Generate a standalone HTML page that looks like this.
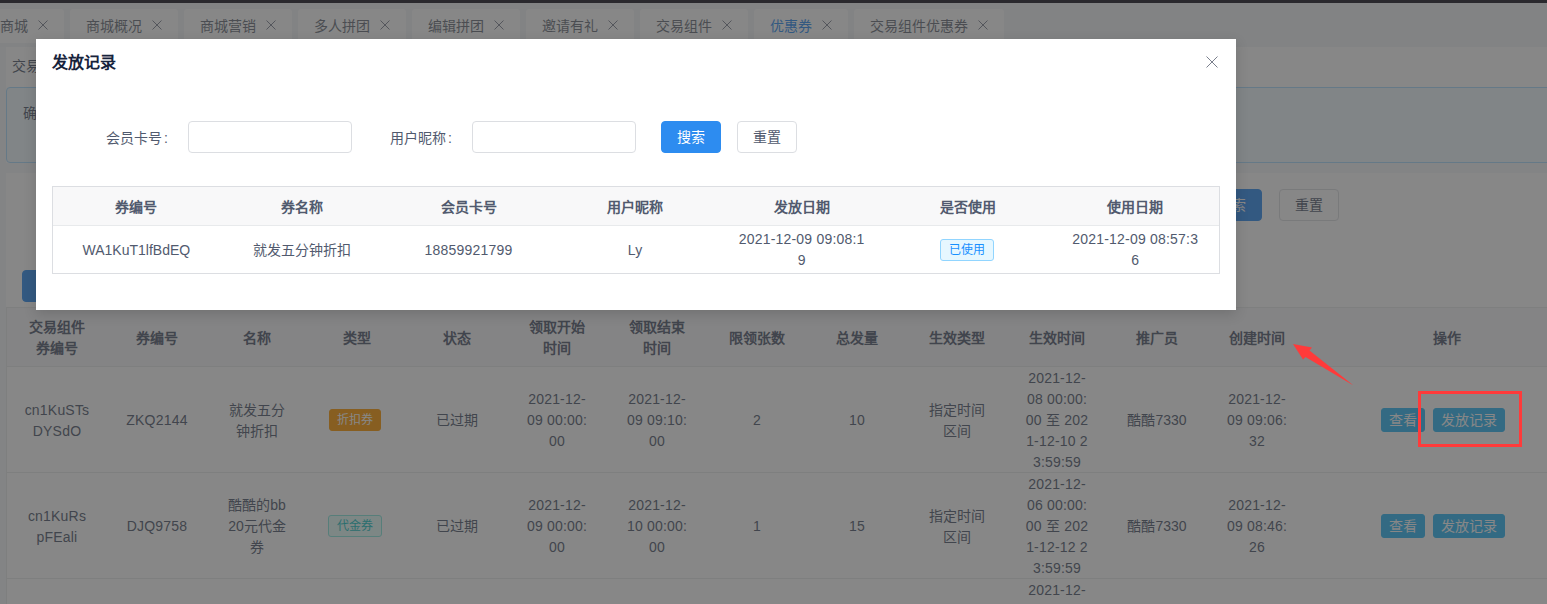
<!DOCTYPE html>
<html lang="zh-CN">
<head>
<meta charset="utf-8">
<style>
*{margin:0;padding:0;box-sizing:border-box;}
html,body{width:1547px;height:604px;overflow:hidden;}
body{position:relative;background:#f5f7f9;font-family:"Liberation Sans",sans-serif;font-size:14px;color:#515a6e;}
.a{position:absolute;}
.t{position:absolute;white-space:nowrap;line-height:21px;text-align:center;padding-top:1px;}
#topbar{left:0;top:0;width:1547px;height:3px;background:#2a292e;z-index:5;}
#tabbar{left:0;top:3px;width:1547px;height:44px;background:#f2f4f8;}
.tab{position:absolute;top:6px;height:34px;background:#fff;border-radius:3px;line-height:34px;font-size:14px;color:#6a6f7a;white-space:nowrap;}
.tab .x{position:absolute;top:0;font-size:12px;color:#808695;}
#content{left:6px;top:47px;width:1541px;height:557px;background:#fff;}
.alert{left:6px;top:87px;width:1560px;height:76px;background:#f0faff;border:1px solid #abdcff;border-radius:4px;}
.btn{position:absolute;height:32px;border-radius:4px;font-size:14px;line-height:30px;text-align:center;white-space:nowrap;}
.bp{background:#2d8cf0;border:1px solid #2d8cf0;color:#fff;}
.bd{background:#fff;border:1px solid #dcdee2;color:#515a6e;}
.bi{position:absolute;height:24px;border-radius:3px;background:#2db7f5;border:1px solid #2db7f5;color:#fff;font-size:14px;line-height:22px;text-align:center;white-space:nowrap;}
.th{font-weight:bold;}
.n{letter-spacing:0.2px;}
.hl{position:absolute;height:1px;background:#e8eaec;}
.tag{position:absolute;height:22px;border-radius:3px;font-size:12px;line-height:20px;text-align:center;white-space:nowrap;}
#mask{left:0;top:3px;width:1547px;height:601px;background:rgba(55,55,55,.6);z-index:10;}
#modal{left:36px;top:39px;width:1200px;height:271px;background:#fff;z-index:11;box-shadow:0 4px 12px rgba(0,0,0,.15);}
#anno{left:0;top:0;width:1547px;height:604px;z-index:20;}
</style>
</head>
<body>
<div id="topbar" class="a"></div>
<div id="tabbar" class="a">
  <div class="tab" style="left:-44px;width:108px;"><span style="position:absolute;left:44px;">商城</span><svg class="x" style="left:82px;top:11px;" width="10" height="10" viewBox="0 0 10 10"><path d="M0.5 0.5L9.5 9.5M9.5 0.5L0.5 9.5" stroke="#808695" stroke-width="1" fill="none"/></svg></div>
  <div class="tab" style="left:70px;width:108px;"><span style="position:absolute;left:16px;">商城概况</span><svg class="x" style="left:82px;top:11px;" width="10" height="10" viewBox="0 0 10 10"><path d="M0.5 0.5L9.5 9.5M9.5 0.5L0.5 9.5" stroke="#808695" stroke-width="1" fill="none"/></svg></div>
  <div class="tab" style="left:184px;width:108px;"><span style="position:absolute;left:16px;">商城营销</span><svg class="x" style="left:82px;top:11px;" width="10" height="10" viewBox="0 0 10 10"><path d="M0.5 0.5L9.5 9.5M9.5 0.5L0.5 9.5" stroke="#808695" stroke-width="1" fill="none"/></svg></div>
  <div class="tab" style="left:298px;width:108px;"><span style="position:absolute;left:16px;">多人拼团</span><svg class="x" style="left:82px;top:11px;" width="10" height="10" viewBox="0 0 10 10"><path d="M0.5 0.5L9.5 9.5M9.5 0.5L0.5 9.5" stroke="#808695" stroke-width="1" fill="none"/></svg></div>
  <div class="tab" style="left:412px;width:108px;"><span style="position:absolute;left:16px;">编辑拼团</span><svg class="x" style="left:82px;top:11px;" width="10" height="10" viewBox="0 0 10 10"><path d="M0.5 0.5L9.5 9.5M9.5 0.5L0.5 9.5" stroke="#808695" stroke-width="1" fill="none"/></svg></div>
  <div class="tab" style="left:526px;width:108px;"><span style="position:absolute;left:16px;">邀请有礼</span><svg class="x" style="left:82px;top:11px;" width="10" height="10" viewBox="0 0 10 10"><path d="M0.5 0.5L9.5 9.5M9.5 0.5L0.5 9.5" stroke="#808695" stroke-width="1" fill="none"/></svg></div>
  <div class="tab" style="left:640px;width:108px;"><span style="position:absolute;left:16px;">交易组件</span><svg class="x" style="left:82px;top:11px;" width="10" height="10" viewBox="0 0 10 10"><path d="M0.5 0.5L9.5 9.5M9.5 0.5L0.5 9.5" stroke="#808695" stroke-width="1" fill="none"/></svg></div>
  <div class="tab" style="left:754px;width:94px;"><span style="position:absolute;left:16px;color:#2d8cf0;">优惠券</span><svg class="x" style="left:68px;top:11px;" width="10" height="10" viewBox="0 0 10 10"><path d="M0.5 0.5L9.5 9.5M9.5 0.5L0.5 9.5" stroke="#808695" stroke-width="1" fill="none"/></svg></div>
  <div class="tab" style="left:854px;width:150px;"><span style="position:absolute;left:16px;">交易组件优惠券</span><svg class="x" style="left:124px;top:11px;" width="10" height="10" viewBox="0 0 10 10"><path d="M0.5 0.5L9.5 9.5M9.5 0.5L0.5 9.5" stroke="#808695" stroke-width="1" fill="none"/></svg></div>
</div>
<div id="content" class="a"></div>
<div class="t" style="left:12px;top:55px;text-align:left;">交易组件优惠券</div>
<div class="a alert"></div>
<div class="t" style="left:23px;top:102px;text-align:left;">确认</div>
<!-- search card -->
<div class="a" style="left:6px;top:163px;width:1541px;height:10px;background:#f5f7f9;"></div>
<div class="btn bp" style="left:1202px;top:189px;width:60px;">搜索</div>
<div class="btn bd" style="left:1279px;top:189px;width:60px;">重置</div>
<div class="btn bp" style="left:22px;top:270px;width:90px;">新增</div>
<!-- bg table -->
<div class="a" style="left:6px;top:307px;width:1541px;height:297px;border-left:1px solid #e8eaec;border-top:1px solid #e8eaec;background:#fff;">
  <div class="a" style="left:0;top:0;width:1541px;height:59px;background:#f8f8f9;"></div>
</div>
<div class="hl" style="left:7px;top:366px;width:1540px;"></div>
<div class="hl" style="left:7px;top:472px;width:1540px;"></div>
<div class="hl" style="left:7px;top:578px;width:1540px;"></div>
<div id="bgtable">
  <!-- header -->
  <div class="t th" style="left:7px;top:316px;width:100px;">交易组件<br>券编号</div>
  <div class="t th" style="left:107px;top:327px;width:100px;">券编号</div>
  <div class="t th" style="left:207px;top:327px;width:100px;">名称</div>
  <div class="t th" style="left:307px;top:327px;width:100px;">类型</div>
  <div class="t th" style="left:407px;top:327px;width:100px;">状态</div>
  <div class="t th" style="left:507px;top:316px;width:100px;">领取开始<br>时间</div>
  <div class="t th" style="left:607px;top:316px;width:100px;">领取结束<br>时间</div>
  <div class="t th" style="left:707px;top:327px;width:100px;">限领张数</div>
  <div class="t th" style="left:807px;top:327px;width:100px;">总发量</div>
  <div class="t th" style="left:907px;top:327px;width:100px;">生效类型</div>
  <div class="t th" style="left:1007px;top:327px;width:100px;">生效时间</div>
  <div class="t th" style="left:1107px;top:327px;width:100px;">推广员</div>
  <div class="t th" style="left:1207px;top:327px;width:100px;">创建时间</div>
  <div class="t th" style="left:1307px;top:327px;width:280px;">操作</div>
  <!-- row 1 -->
  <div class="t n" style="left:7px;top:399px;width:100px;">cn1KuSTs<br>DYSdO</div>
  <div class="t n" style="left:107px;top:409px;width:100px;">ZKQ2144</div>
  <div class="t" style="left:207px;top:399px;width:100px;">就发五分<br>钟折扣</div>
  <div class="tag" style="left:329px;top:409px;width:52px;background:#f90;border:1px solid #f90;color:#fff;">折扣券</div>
  <div class="t" style="left:407px;top:409px;width:100px;">已过期</div>
  <div class="t n" style="left:507px;top:388px;width:100px;">2021-12-<br>09 00:00:<br>00</div>
  <div class="t n" style="left:607px;top:388px;width:100px;">2021-12-<br>09 09:10:<br>00</div>
  <div class="t n" style="left:707px;top:409px;width:100px;">2</div>
  <div class="t n" style="left:807px;top:409px;width:100px;">10</div>
  <div class="t" style="left:907px;top:399px;width:100px;">指定时间<br>区间</div>
  <div class="t n" style="left:1007px;top:367px;width:100px;">2021-12-<br>08 00:00:<br>00 至 202<br>1-12-10 2<br>3:59:59</div>
  <div class="t" style="left:1107px;top:409px;width:100px;">酷酷7330</div>
  <div class="t n" style="left:1207px;top:388px;width:100px;">2021-12-<br>09 09:06:<br>32</div>
  <div class="bi" style="left:1381px;top:408px;width:44px;">查看</div>
  <div class="bi" style="left:1433px;top:408px;width:72px;">发放记录</div>
  <!-- row 2 -->
  <div class="t n" style="left:7px;top:505px;width:100px;">cn1KuRs<br>pFEali</div>
  <div class="t n" style="left:107px;top:515px;width:100px;">DJQ9758</div>
  <div class="t" style="left:207px;top:494px;width:100px;">酷酷的bb<br>20元代金<br>券</div>
  <div class="tag" style="left:328px;top:515px;width:54px;background:#e6fffb;border:1px solid #87e8de;color:#13c2c2;">代金券</div>
  <div class="t" style="left:407px;top:515px;width:100px;">已过期</div>
  <div class="t n" style="left:507px;top:494px;width:100px;">2021-12-<br>09 00:00:<br>00</div>
  <div class="t n" style="left:607px;top:494px;width:100px;">2021-12-<br>10 00:00:<br>00</div>
  <div class="t n" style="left:707px;top:515px;width:100px;">1</div>
  <div class="t n" style="left:807px;top:515px;width:100px;">15</div>
  <div class="t" style="left:907px;top:505px;width:100px;">指定时间<br>区间</div>
  <div class="t n" style="left:1007px;top:473px;width:100px;">2021-12-<br>06 00:00:<br>00 至 202<br>1-12-12 2<br>3:59:59</div>
  <div class="t" style="left:1107px;top:515px;width:100px;">酷酷7330</div>
  <div class="t n" style="left:1207px;top:494px;width:100px;">2021-12-<br>09 08:46:<br>26</div>
  <div class="bi" style="left:1381px;top:514px;width:44px;">查看</div>
  <div class="bi" style="left:1433px;top:514px;width:72px;">发放记录</div>
  <!-- row 3 -->
  <div class="t n" style="left:1007px;top:579px;width:100px;">2021-12-<br>06 00:00:</div>
</div>

<div id="mask" class="a"></div>

<div id="modal" class="a">
  <div class="t" style="left:16px;top:12px;font-size:16px;font-weight:bold;color:#17233c;text-align:left;">发放记录</div>
  <svg class="a" style="left:1170px;top:17px;" width="12" height="12" viewBox="0 0 12 12"><path d="M0.5 0.5L11.5 11.5M11.5 0.5L0.5 11.5" stroke="#7a7f8c" stroke-width="1" fill="none"/></svg>
  <div class="t" style="left:70px;top:88px;text-align:left;">会员卡号<span style="margin-left:2px">:</span></div>
  <div class="a" style="left:152px;top:82px;width:164px;height:32px;border:1px solid #dcdee2;border-radius:4px;"></div>
  <div class="t" style="left:354px;top:88px;text-align:left;">用户昵称<span style="margin-left:2px">:</span></div>
  <div class="a" style="left:436px;top:82px;width:164px;height:32px;border:1px solid #dcdee2;border-radius:4px;"></div>
  <div class="btn bp" style="left:625px;top:82px;width:60px;">搜索</div>
  <div class="btn bd" style="left:701px;top:82px;width:60px;">重置</div>
  <!-- table -->
  <div class="a" style="left:16px;top:147px;width:1168px;height:88px;border:1px solid #dcdee2;">
    <div class="a" style="left:0;top:0;width:1166px;height:39px;background:#f8f8f9;border-bottom:1px solid #e8eaec;"></div>
  </div>
  <div class="t th" style="left:17px;top:157px;width:166.7px;">券编号</div>
  <div class="t th" style="left:182.9px;top:157px;width:166.7px;">券名称</div>
  <div class="t th" style="left:349.2px;top:157px;width:166.7px;">会员卡号</div>
  <div class="t th" style="left:515.7px;top:157px;width:166.7px;">用户昵称</div>
  <div class="t th" style="left:682.3px;top:157px;width:166.7px;">发放日期</div>
  <div class="t th" style="left:849px;top:157px;width:166.7px;">是否使用</div>
  <div class="t th" style="left:1015.9px;top:157px;width:166.7px;">使用日期</div>
  <div class="t" style="left:17px;top:200px;width:166.7px;">WA1KuT1lfBdEQ</div>
  <div class="t" style="left:182.9px;top:200px;width:166.7px;">就发五分钟折扣</div>
  <div class="t n" style="left:349.2px;top:200px;width:166.7px;">18859921799</div>
  <div class="t n" style="left:515.7px;top:200px;width:166.7px;">Ly</div>
  <div class="t n" style="left:682.3px;top:189px;width:166.7px;">2021-12-09 09:08:1<br>9</div>
  <div class="tag" style="left:904px;top:200px;width:54px;background:#e6f7ff;border:1px solid #91d5ff;color:#1890ff;">已使用</div>
  <div class="t n" style="left:1015.9px;top:189px;width:166.7px;">2021-12-09 08:57:3<br>6</div>
</div>

<svg id="anno" class="a" width="1547" height="604" viewBox="0 0 1547 604">
  <polygon points="1293,344 1312,347.5 1309.5,350.5 1353.5,385.5 1305.5,357 1303,359.5" fill="#ff3a3a"/>
  <rect x="1419.5" y="392.5" width="101" height="53" fill="none" stroke="#ff3a3a" stroke-width="3"/>
</svg>
</body>
</html>
